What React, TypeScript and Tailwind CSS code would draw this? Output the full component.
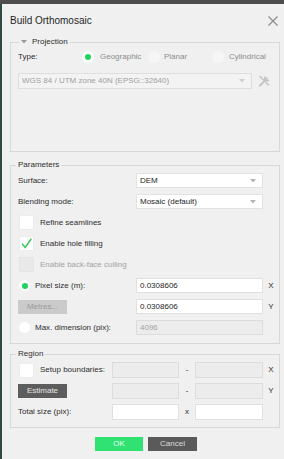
import React from 'react';

// small helpers for the Qt-looking widgets
const Arrow = ({ light }: { light?: boolean }) => (
  <svg width="6" height="4" viewBox="0 0 6 4" className="shrink-0">
    <path d="M0 0 L6 0 L3 3.5 Z" fill={light ? '#d0d0d0' : '#b4b4b4'} />
  </svg>
);

const Combo = ({ text, disabled, className = '' }: { text: string; disabled?: boolean; className?: string }) => (
  <div
    className={`h-[15px] flex items-center justify-between pl-[3px] pr-[6px] border ${
      disabled ? 'bg-[#f3f3f3] border-[#dedede] text-[#a0a0a0]' : 'bg-white border-[#e2e2e2] text-[#262626]'
    } ${className}`}
  >
    <span className="truncate">{text}</span>
    <Arrow light={disabled} />
  </div>
);

const Field = ({ value = '', disabled }: { value?: string; disabled?: boolean }) => (
  <div
    className={`h-full flex items-center pl-[3px] border ${
      disabled ? 'bg-[#ececec] border-[#dcdcdc] text-[#a3a3a3]' : 'bg-white border-[#e0e0e0] text-[#262626]'
    }`}
  >
    {value}
  </div>
);

const Radio = ({ checked, size = 11, faint }: { checked?: boolean; size?: number; faint?: boolean }) => (
  <span
    className={`shrink-0 rounded-full flex items-center justify-center ${faint ? 'bg-[#f6f6f6]' : 'bg-white'}`}
    style={{ width: size, height: size }}
  >
    {checked && <span className="w-[6px] h-[6px] rounded-full bg-[#22d35c]" />}
  </span>
);

const Check = ({ checked, disabled }: { checked?: boolean; disabled?: boolean }) => (
  <span
    className={`ml-[1px] w-[15px] h-[15px] shrink-0 flex items-center justify-center border ${
      disabled ? 'bg-[#e9e9e9] border-[#e4e4e4]' : 'bg-white border-[#ececec]'
    }`}
  >
    {checked && (
      <svg width="13" height="13" viewBox="0 0 13 13">
        <path d="M2.5 7.2 L5.2 10.5 L11 2.2" fill="none" stroke="#3fcc5e" strokeWidth="1.6" strokeLinecap="round" />
      </svg>
    )}
  </span>
);

const Group = ({ title, children, arrow }: { title: string; children: React.ReactNode; arrow?: boolean }) => (
  <fieldset className="ml-[8px] mr-[4px] border border-[#d8d8d8]">
    <legend className={`${arrow ? 'ml-[8px]' : 'ml-[5px]'} px-[2px] leading-[10px] text-[#2e2e2e] flex items-center`}>
      {arrow && (
        <svg width="6" height="4" viewBox="0 0 6 4" className="mr-[5px]">
          <path d="M0 0 L6 0 L3 3.5 Z" fill="#9a9a9a" />
        </svg>
      )}
      {title}
    </legend>
    {children}
  </fieldset>
);

export default function App() {
  return (
    <div className="w-[284px] h-[459px] bg-[#4d4d4d] pt-[4px] flex font-['Liberation_Sans',Arial,sans-serif] text-[8px] leading-none overflow-hidden">
      <div className="w-[2px] bg-[#2e4846]" />
      <div className="flex-1 bg-[#f0f0f0] flex flex-col">
        {/* title bar */}
        <div className="h-[33px] flex items-center justify-between pl-[8px] pr-[6px]">
          <span className="text-[10px] text-[#1f1f1f]">Build Orthomosaic</span>
          <svg width="10" height="10" viewBox="0 0 10 10">
            <path d="M0.5 0.5 L9.5 9.5 M9.5 0.5 L0.5 9.5" stroke="#8e8e8e" strokeWidth="1.3" />
          </svg>
        </div>

        <Group title="Projection" arrow>
          <div className="pl-[7px] pt-[3px] pb-[62px]">
            <div className="h-[14px] flex items-center">
              <span className="w-[64px] text-[#2e2e2e]">Type:</span>
              <span className="w-[66px] flex items-center gap-[6px] text-[#8c8c8c]">
                <Radio checked size={12} />
                Geographic
              </span>
              <span className="w-[64px] flex items-center gap-[4px] text-[#8c8c8c]">
                <Radio size={12} faint />
                Planar
              </span>
              <span className="flex items-center gap-[5px] text-[#8c8c8c]">
                <Radio size={12} faint />
                Cylindrical
              </span>
            </div>
            <div className="mt-[9px] flex items-center gap-[6px]">
              <Combo text="WGS 84 / UTM zone 40N (EPSG::32640)" disabled className="w-[234px] h-[16px]" />
              <svg width="13" height="12" viewBox="0 0 13 12">
                <path d="M2 10.5 L9 3.5" stroke="#c4c4c4" strokeWidth="2" strokeLinecap="round" />
                <path d="M7.5 1.5 A2.4 2.4 0 1 0 11 5" fill="none" stroke="#c4c4c4" strokeWidth="1.6" />
                <path d="M2.5 2 L10.5 10" stroke="#c4c4c4" strokeWidth="1.4" strokeLinecap="round" />
                <path d="M1 1 L3.5 1.5 L2.5 3.5 Z" fill="#c4c4c4" />
              </svg>
            </div>
          </div>
        </Group>

        <div className="h-[8px]" />

        <Group title="Parameters">
          <div className="pl-[7px] pt-[3px] pb-[8px] grid grid-cols-[118px_127px_16px] auto-rows-[15px] gap-y-[6px] items-center text-[#2e2e2e]">
            <span>Surface:</span>
            <Combo text="DEM" />
            <span />

            <span>Blending mode:</span>
            <Combo text="Mosaic (default)" />
            <span />

            <div className="col-span-3 flex items-center gap-[6px]">
              <Check />
              Refine seamlines
            </div>
            <div className="col-span-3 flex items-center gap-[6px]">
              <Check checked />
              Enable hole filling
            </div>
            <div className="col-span-3 flex items-center gap-[6px] text-[#a3a3a3]">
              <Check disabled />
              Enable back-face culling
            </div>

            <div className="flex items-center gap-[5px] pl-[1px]">
              <Radio checked />
              Pixel size (m):
            </div>
            <Field value="0.0308606" />
            <span className="text-center">X</span>

            <div className="h-[14px] w-[49px] bg-[#cacaca] text-[#9c9c9c] flex items-center justify-center">Metres...</div>
            <Field value="0.0308606" />
            <span className="text-center">Y</span>

            <div className="flex items-center gap-[5px] pl-[1px]">
              <Radio />
              Max. dimension (pix):
            </div>
            <Field value="4096" disabled />
            <span />
          </div>
        </Group>

        <div className="h-[5px]" />

        <Group title="Region">
          <div className="pl-[7px] pt-[3px] pb-[7px] grid grid-cols-[94px_67px_16px_68px_16px] auto-rows-[16px] gap-y-[5px] items-center text-[#2e2e2e]">
            <div className="flex items-center gap-[6px]">
              <Check />
              Setup boundaries:
            </div>
            <Field disabled />
            <span className="text-center">-</span>
            <Field disabled />
            <span className="text-center">X</span>

            <div className="h-[14px] w-[49px] bg-[#5d5d5d] text-[#e6e6e6] flex items-center justify-center">Estimate</div>
            <Field disabled />
            <span className="text-center">-</span>
            <Field disabled />
            <span className="text-center">Y</span>

            <span>Total size (pix):</span>
            <Field />
            <span className="text-center">x</span>
            <Field />
            <span />
          </div>
        </Group>

        <div className="mt-[9px] flex justify-center gap-[5px] pl-[6px]">
          <button className="w-[48px] h-[14px] bg-[#30e272] text-[#eafff1] flex items-center justify-center">OK</button>
          <button className="w-[49px] h-[14px] bg-[#5a5a5a] text-[#dcdcdc] flex items-center justify-center">Cancel</button>
        </div>
      </div>
    </div>
  );
}
